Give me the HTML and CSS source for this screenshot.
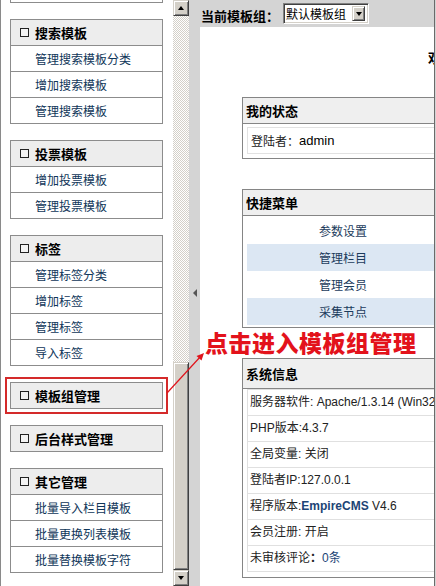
FILE: index.html
```html
<!DOCTYPE html>
<html lang="zh-CN">
<head>
<meta charset="utf-8">
<title>模板管理</title>
<link rel="stylesheet" href="styles.css">
</head>
<body>
<div class="frameset">
  <aside class="menu-frame">
    <div class="menu">
      <div class="menu-box menu-box--cut">
        <div class="menu-item menu-item--blank"></div>
      </div>

      <div class="menu-box">
        <div class="menu-head"><span class="fold"></span>搜索模板</div>
        <a class="menu-item" href="#">管理搜索模板分类</a>
        <a class="menu-item" href="#">增加搜索模板</a>
        <a class="menu-item" href="#">管理搜索模板</a>
      </div>

      <div class="menu-box">
        <div class="menu-head"><span class="fold"></span>投票模板</div>
        <a class="menu-item" href="#">增加投票模板</a>
        <a class="menu-item" href="#">管理投票模板</a>
      </div>

      <div class="menu-box">
        <div class="menu-head"><span class="fold"></span>标签</div>
        <a class="menu-item" href="#">管理标签分类</a>
        <a class="menu-item" href="#">增加标签</a>
        <a class="menu-item" href="#">管理标签</a>
        <a class="menu-item" href="#">导入标签</a>
      </div>

      <div class="menu-box menu-box--marked">
        <div class="menu-head"><span class="fold"></span>模板组管理</div>
      </div>

      <div class="menu-box">
        <div class="menu-head"><span class="fold"></span>后台样式管理</div>
      </div>

      <div class="menu-box">
        <div class="menu-head"><span class="fold"></span>其它管理</div>
        <a class="menu-item" href="#">批量导入栏目模板</a>
        <a class="menu-item" href="#">批量更换列表模板</a>
        <a class="menu-item" href="#">批量替换模板字符</a>
      </div>
    </div>
  </aside>

  <div class="scrollbar">
    <div class="sb-btn"><span class="tri tri-up"></span></div>
    <div class="sb-track"><div class="sb-thumb"></div></div>
    <div class="sb-btn"><span class="tri tri-down"></span></div>
  </div>

  <div class="splitter"><span class="tri-left"></span></div>

  <main class="main-frame">
    <div class="toolbar">
      <b class="toolbar-label">当前模板组：</b>
      <div class="select">
        <span class="select-value">默认模板组</span>
        <span class="select-btn"><span class="tri tri-down"></span></span>
      </div>
    </div>

    <div class="content">
      <div class="content-inner">
        <h1 class="welcome">欢迎使用帝国网站管理系统</h1>

        <section class="panel">
          <h2 class="panel-head">我的状态</h2>
          <div class="panel-body">
            <div class="status">登陆者：<span class="user">admin</span></div>
          </div>
        </section>

        <section class="panel">
          <h2 class="panel-head">快捷菜单</h2>
          <div class="panel-body panel-body--menu">
            <a class="quick" href="#">参数设置</a>
            <a class="quick quick--alt" href="#">管理栏目</a>
            <a class="quick" href="#">管理会员</a>
            <a class="quick quick--alt" href="#">采集节点</a>
          </div>
        </section>

        <section class="panel">
          <h2 class="panel-head panel-head--tall">系统信息</h2>
          <div class="panel-body panel-body--info">
            <ul class="info">
              <li>服务器软件: Apache/1.3.14 (Win32)</li>
              <li>PHP版本:4.3.7</li>
              <li>全局变量: 关闭</li>
              <li>登陆者IP:127.0.0.1</li>
              <li>程序版本:<b class="brand">EmpireCMS</b> V4.6</li>
              <li>会员注册: 开启</li>
              <li>未审核评论<b>：</b><span class="count">0条</span></li>
            </ul>
          </div>
        </section>
      </div>
    </div>
  </main>
</div>

<!-- callout pointing at the template-group entry -->
<svg class="callout-arrow" width="436" height="586" viewBox="0 0 436 586" aria-hidden="true">
  <line x1="167" y1="393" x2="201" y2="356" stroke="#e0141c" stroke-width="1.2"/>
  <polygon points="204,353 201.5,360.5 196.5,356" fill="#e0141c"/>
</svg>
<div class="callout-text">点击进入模板组管理</div>
</body>
</html>
```

FILE: styles.css
```css
* {
  box-sizing: border-box;
}

html, body {
  margin: 0;
  padding: 0;
}

body {
  width: 436px;
  height: 586px;
  overflow: hidden;
  position: relative;
  background: #d4d4d4;
  font-family: "Liberation Sans", "Noto Sans CJK SC", sans-serif;
  font-size: 12px;
  color: #222;
}

a {
  text-decoration: none;
}

.frameset {
  display: flex;
  height: 586px;
}

/* ---------- left menu frame ---------- */
.menu-frame {
  width: 173px;
  flex: none;
  background: #fff;
  border-left: 1px solid #8a8a8a;
  padding-left: 9px;
  overflow: hidden;
}

.menu {
  width: 153px;
  display: flex;
  flex-direction: column;
  gap: 16px;
}

.menu-box {
  border: 1px solid #8c8c8c;
  display: flex;
  flex-direction: column;
}

.menu-box--cut {
  margin-top: -24px;
}

.menu-box--marked {
  outline: 2px solid #d42a2a;
  outline-offset: 3px;
}

.menu-head {
  height: 25px;
  background: #ededed;
  display: flex;
  align-items: center;
  padding-left: 9px;
  font-family: "Noto Sans CJK SC", sans-serif;
  font-weight: 700;
  font-size: 13px;
  color: #000;
}

.fold {
  width: 9px;
  height: 9px;
  border: 1px solid #222;
  background: #f4f4f4;
  margin-right: 6px;
  flex: none;
}

.menu-item {
  height: 26px;
  border-top: 1px solid #8c8c8c;
  display: flex;
  align-items: center;
  padding-left: 24px;
  font-family: "Noto Sans CJK SC", sans-serif;
  color: #0f3659;
}

.menu-item--blank {
  height: 25px;
  border-top: 0;
}

/* ---------- scrollbar ---------- */
.scrollbar {
  width: 16px;
  flex: none;
  display: flex;
  flex-direction: column;
}

.sb-btn,
.sb-thumb,
.select-btn {
  background: #d4d0c8;
  border: 1px solid;
  border-color: #d4d0c8 #404040 #404040 #d4d0c8;
  box-shadow: inset 1px 1px #fff, inset -1px -1px #808080;
}

.sb-btn {
  height: 16px;
  flex: none;
  display: flex;
  align-items: center;
  justify-content: center;
}

.sb-track {
  flex: 1;
  display: flex;
  flex-direction: column;
  justify-content: flex-end;
  background: repeating-conic-gradient(#d4d0c8 0 25%, #fff 0 50%) 0 0 / 2px 2px;
}

.sb-thumb {
  height: 208px;
}

.tri {
  width: 0;
  height: 0;
  border-left: 3.5px solid transparent;
  border-right: 3.5px solid transparent;
}

.tri-up {
  border-bottom: 4px solid #000;
}

.tri-down {
  border-top: 4px solid #000;
}

/* ---------- frame splitter ---------- */
.splitter {
  width: 11px;
  flex: none;
  background: #d4d4d4;
  display: flex;
  align-items: center;
  justify-content: center;
}

.tri-left {
  width: 0;
  height: 0;
  border-top: 4px solid transparent;
  border-bottom: 4px solid transparent;
  border-right: 4px solid #555;
}

/* ---------- main frame ---------- */
.main-frame {
  flex: 1;
  min-width: 0;
  display: flex;
  flex-direction: column;
  border-right: 1px solid #6a6a6a;
  margin-right: 1px;
}

.toolbar {
  height: 27px;
  flex: none;
  background: #d4d4d4;
  display: flex;
  align-items: flex-start;
  padding: 3px 0 0 1px;
}

.toolbar-label {
  font-family: "Noto Sans CJK SC", sans-serif;
  font-size: 13px;
  line-height: 15px;
  margin-top: 5px;
  color: #000;
}

.select {
  margin-left: 4px;
  width: 86px;
  height: 21px;
  background: #fff;
  border: 1px solid;
  border-color: #808080 #fff #fff #808080;
  box-shadow: inset 1px 1px #404040, inset -1px -1px #d4d0c8;
  display: flex;
  align-items: center;
  justify-content: space-between;
  padding: 0 3px 0 2px;
}

.select-value {
  font-family: "Noto Sans CJK SC", sans-serif;
  font-size: 12px;
  color: #000;
}

.select-btn {
  width: 13px;
  height: 15px;
  display: flex;
  align-items: center;
  justify-content: center;
}

.content {
  flex: 1;
  background: #fff;
  overflow: hidden;
}

.content-inner {
  width: 286px;
}

.welcome {
  margin: 20px 0 30px;
  padding-left: 228px;
  white-space: nowrap;
  font-family: "Noto Sans CJK SC", sans-serif;
  font-size: 14px;
  line-height: 20px;
  color: #000;
}

.panel {
  width: 202px;
  margin: 0 0 30px 42px;
  border: 1px solid #858585;
}

.panel-head {
  margin: 0;
  height: 26px;
  background: #efefef;
  border-bottom: 1px solid #858585;
  display: flex;
  align-items: center;
  padding-left: 3px;
  font-family: "Noto Sans CJK SC", sans-serif;
  font-size: 13px;
  font-weight: 700;
  color: #000;
}

.panel-head--tall {
  height: 30px;
}

.panel-body {
  padding: 3px 4px 4px;
}

.panel-body--menu {
  padding: 1px 4px 2px;
}

.panel-body--info {
  padding: 0 4px 5px;
}

.status {
  height: 27px;
  border: 1px solid #e2e2e2;
  display: flex;
  align-items: center;
  padding-left: 3px;
  color: #222;
}

.user {
  font-size: 13px;
  color: #000;
}

.quick {
  height: 27px;
  display: flex;
  align-items: center;
  justify-content: center;
  color: #1b3b5c;
}

.quick--alt {
  background: #dce7f3;
}

.info {
  list-style: none;
  margin: 0;
  padding: 0;
  border: 1px solid #e0e0e0;
  border-right: 0;
}

.info li {
  height: 26px;
  line-height: 25px;
  padding-left: 2px;
  white-space: nowrap;
  border-top: 1px solid #e0e0e0;
}

.info li:first-child {
  height: 25px;
  border-top: 0;
}

.brand {
  color: #1c4475;
}

.count {
  color: #1c4475;
}

/* ---------- callout ---------- */
.callout-arrow {
  position: absolute;
  left: 0;
  top: 0;
  pointer-events: none;
}

.callout-text {
  position: absolute;
  left: 205px;
  top: 329px;
  font-family: "Noto Sans CJK SC", sans-serif;
  font-size: 23px;
  line-height: 26px;
  font-weight: 900;
  letter-spacing: 0.5px;
  color: #e3121b;
  white-space: nowrap;
}
```
